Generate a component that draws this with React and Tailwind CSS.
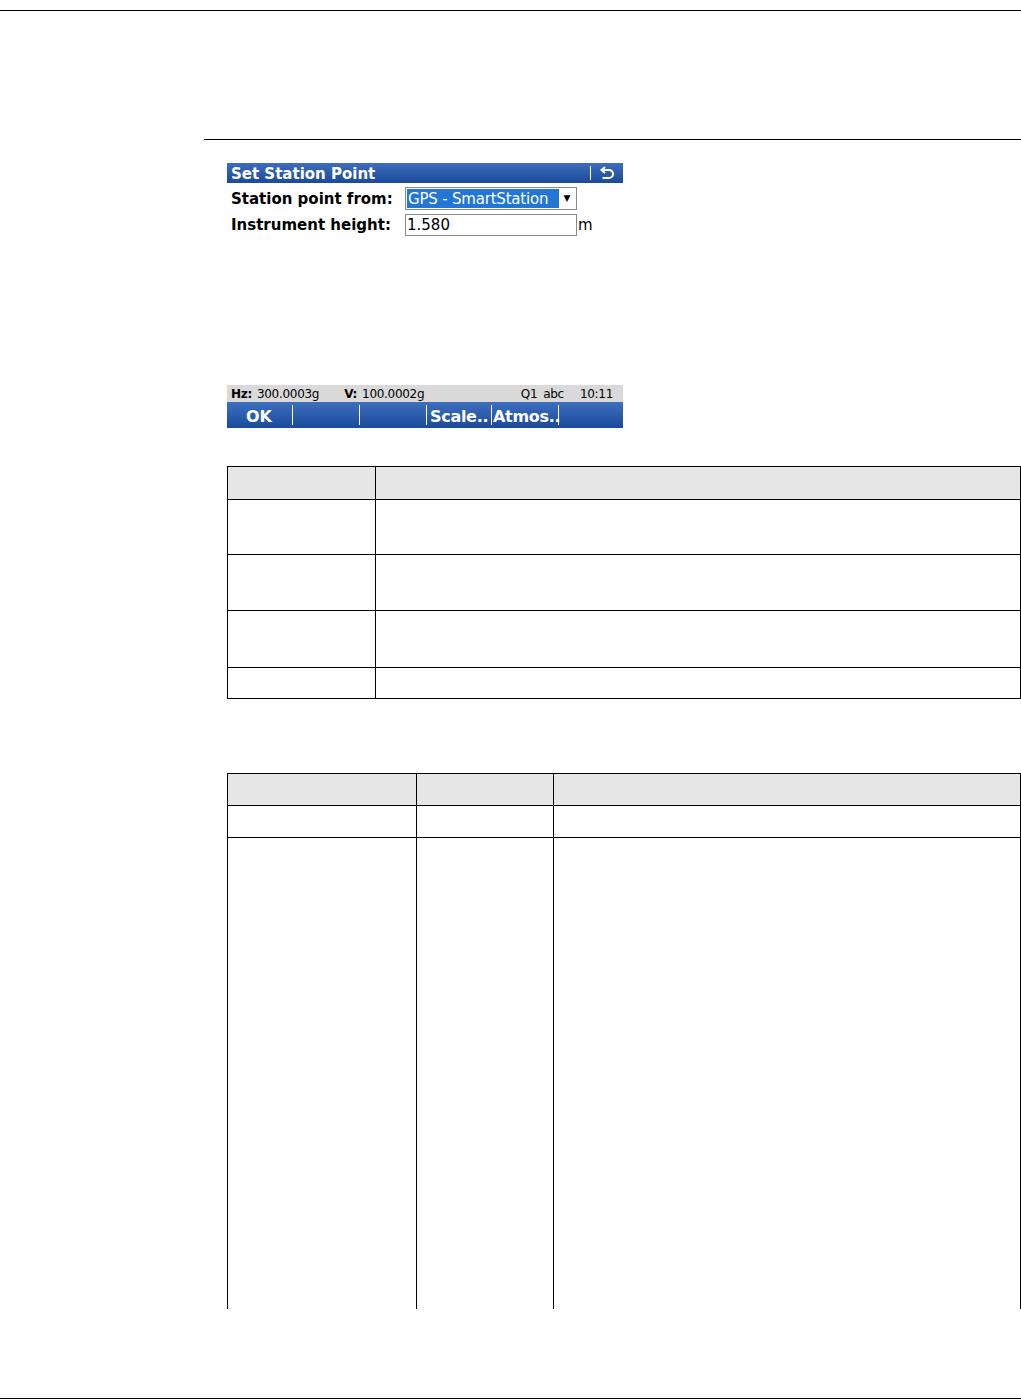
import React from "react";

const font = { fontFamily: '"DejaVu Sans", Verdana, sans-serif' };

function ReturnIcon() {
  return (
    <svg width="16" height="14" viewBox="0 0 16 14" fill="none">
      <path d="M3.5 4 H10 A4 4 0 0 1 10 12 H3.5" stroke="white" strokeWidth="2" />
      <path d="M6 1 L2.5 4 L6 7" stroke="white" strokeWidth="2" fill="none" />
    </svg>
  );
}

function Screen() {
  return (
    <div className="w-[396px] ml-[227px] mt-[23px]" style={font}>
      <div className="h-[20px] bg-gradient-to-b from-[#3d6dbb] to-[#1c4a9a] flex items-center justify-between pl-[4px] pr-[8px]">
        <span className="text-white font-bold text-[15px] leading-none pt-[2px]">Set Station Point</span>
        <div className="flex items-center gap-[8px]">
          <div className="w-px h-[14px] bg-white" />
          <ReturnIcon />
        </div>
      </div>
      <div className="h-[202px] bg-white pt-[4px]">
        <div className="flex items-center h-[23px]">
          <span className="w-[178px] pl-[4px] font-bold text-[15px] text-black leading-none pt-[2px]">Station point from:</span>
          <div className="w-[172px] h-[23px] border border-[#8a8a8a] flex items-center p-px">
            <div className="w-[152px] h-[19px] bg-[#2276d6] text-white text-[15px] leading-none flex items-center pl-px pt-[2px] tracking-[-0.2px]">GPS - SmartStation</div>
            <div className="flex-1 flex justify-center text-[9px] text-black">▼</div>
          </div>
        </div>
        <div className="flex items-center h-[23px] mt-[3px]">
          <span className="w-[178px] pl-[4px] font-bold text-[15px] text-black leading-none pt-px">Instrument height:</span>
          <div className="w-[172px] h-[22px] border border-[#8a8a8a] flex items-center pl-px pt-px text-[15px] leading-none text-black">1.580</div>
          <span className="text-[15px] leading-none text-black pl-px pt-px">m</span>
        </div>
      </div>
      <div className="h-[17px] bg-[#d9d9d9] flex items-center text-[12px] leading-none text-black pl-[4px] tracking-[-0.3px] pt-px">
        <span className="font-bold">Hz:</span>
        <span className="ml-[5px]">300.0003g</span>
        <span className="font-bold ml-[25px]">V:</span>
        <span className="ml-[5px]">100.0002g</span>
        <span className="ml-auto">Q1</span>
        <span className="ml-[6px]">abc</span>
        <span className="ml-[16px] mr-[10px]">10:11</span>
      </div>
      <div className="h-[26px] bg-gradient-to-b from-[#3e6fbd] to-[#1a4a9b] flex items-center text-white font-bold text-[16px] leading-none">
        <div className="w-[65px] pl-[19px] pt-[3px]">OK</div>
        <div className="w-px h-[20px] bg-white" />
        <div className="w-[66px]" />
        <div className="w-px h-[20px] bg-white" />
        <div className="w-[66px]" />
        <div className="w-px h-[20px] bg-white" />
        <div className="w-[64px] pl-[3px] pt-[3px] tracking-[-0.3px]">Scale..</div>
        <div className="w-px h-[20px] bg-white" />
        <div className="w-[66px] pl-px pt-[3px] tracking-[-0.3px]">Atmos..</div>
        <div className="w-px h-[20px] bg-white" />
      </div>
    </div>
  );
}

export default function App() {
  return (
    <div className="w-[1021px] h-[1400px] bg-white flex flex-col relative overflow-hidden">
      <div className="h-px bg-black mt-[10px]" />
      <div className="h-px bg-black ml-[204px] mt-[128px]" />
      <Screen />

      <table className="ml-[227px] mt-[38px] w-[794px] border-collapse table-fixed">
        <colgroup>
          <col className="w-[148px]" />
          <col />
        </colgroup>
        <tbody>
          <tr className="h-[33px] bg-[#e6e6e6]">
            <td className="border border-black" />
            <td className="border border-black" />
          </tr>
          <tr className="h-[55px]">
            <td className="border border-black" />
            <td className="border border-black" />
          </tr>
          <tr className="h-[56px]">
            <td className="border border-black" />
            <td className="border border-black" />
          </tr>
          <tr className="h-[57px]">
            <td className="border border-black" />
            <td className="border border-black" />
          </tr>
          <tr className="h-[31px]">
            <td className="border border-black" />
            <td className="border border-black" />
          </tr>
        </tbody>
      </table>

      <table className="ml-[227px] mt-[74px] w-[794px] border-collapse table-fixed">
        <colgroup>
          <col className="w-[189px]" />
          <col className="w-[137px]" />
          <col />
        </colgroup>
        <tbody>
          <tr className="h-[32px] bg-[#e6e6e6]">
            <td className="border border-black" />
            <td className="border border-black" />
            <td className="border border-black" />
          </tr>
          <tr className="h-[32px]">
            <td className="border border-black" />
            <td className="border border-black" />
            <td className="border border-black" />
          </tr>
          <tr className="h-[471px]">
            <td className="border border-black border-b-0" />
            <td className="border border-black border-b-0" />
            <td className="border border-black border-b-0" />
          </tr>
        </tbody>
      </table>

      <div className="h-px bg-black mt-auto mb-[1px]" />
    </div>
  );
}
